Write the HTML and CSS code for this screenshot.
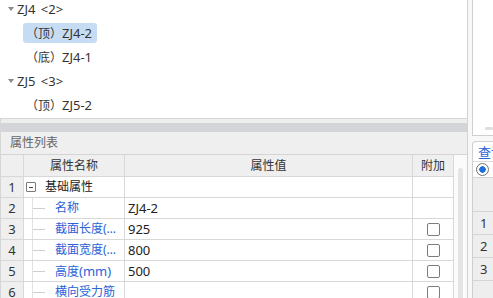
FILE: index.html
```html
<!DOCTYPE html>
<html>
<head>
<meta charset="utf-8">
<link rel="stylesheet" href="styles.css">
</head>
<body>
<div class="app">
  <div class="left">
    <div class="tree-panel">
      <div class="tree">
        <div class="node parent"><span class="caret"></span><span class="lat">ZJ4 &lt;2&gt;</span></div>
        <div class="node child"><span class="item selected">（顶）<span class="lat">ZJ4-2</span></span></div>
        <div class="node child"><span class="item">（底）<span class="lat">ZJ4-1</span></span></div>
        <div class="node parent"><span class="caret"></span><span class="lat">ZJ5 &lt;3&gt;</span></div>
        <div class="node child"><span class="item">（顶）<span class="lat">ZJ5-2</span></span></div>
      </div>
    </div>
    <div class="bottom">
      <div class="spacer"></div>
      <div class="band"></div>
      <div class="prop-title">属性列表</div>
      <div class="prop-body">
        <div class="grid">
          <div class="cell hd"></div>
          <div class="cell hd">属性名称</div>
          <div class="cell hd">属性值</div>
          <div class="cell hd">附加</div>

          <div class="cell rn lat">1</div>
          <div class="cell name"><span class="toggle"></span><span class="group">基础属性</span></div>
          <div class="cell val"></div>
          <div class="cell chk"></div>

          <div class="cell rn lat">2</div>
          <div class="cell name"><span class="guide"></span><span class="label">名称</span></div>
          <div class="cell val lat">ZJ4-2</div>
          <div class="cell chk"></div>

          <div class="cell rn lat">3</div>
          <div class="cell name"><span class="guide"></span><span class="label">截面长度(mm)</span></div>
          <div class="cell val lat">925</div>
          <div class="cell chk"><span class="box"></span></div>

          <div class="cell rn lat">4</div>
          <div class="cell name"><span class="guide"></span><span class="label">截面宽度(mm)</span></div>
          <div class="cell val lat">800</div>
          <div class="cell chk"><span class="box"></span></div>

          <div class="cell rn lat">5</div>
          <div class="cell name"><span class="guide"></span><span class="label">高度<span class="lat">(mm)</span></span></div>
          <div class="cell val lat">500</div>
          <div class="cell chk"><span class="box"></span></div>

          <div class="cell rn lat">6</div>
          <div class="cell name"><span class="guide"></span><span class="label">横向受力筋</span></div>
          <div class="cell val"></div>
          <div class="cell chk"><span class="box"></span></div>
        </div>
        <div class="vscroll"><div class="thumb"></div></div>
      </div>
    </div>
  </div>
  <div class="right">
    <div class="rt-top"><div class="hthumb"></div></div>
    <div class="rt-tab">查询</div>
    <div class="rt-radio"><span class="radio"></span></div>
    <div class="rt-head"></div>
    <div class="rt-row lat">1</div>
    <div class="rt-row lat">2</div>
    <div class="rt-row lat">3</div>
    <div class="rt-rest"></div>
  </div>
</div>
</body>
</html>
```

FILE: styles.css
```css
* { box-sizing: border-box; }
html, body {
  margin: 0;
  padding: 0;
  width: 493px;
  height: 298px;
  overflow: hidden;
  background: #f7f7f7;
  font-family: "Noto Sans", "Noto Sans CJK SC", sans-serif;
  font-size: 12px;
  color: #333;
}
.lat { font-size: 13px; }

.app {
  display: flex;
  width: 493px;
  height: 298px;
  overflow: hidden;
}

.left {
  width: 468px;
  flex: none;
  display: flex;
  flex-direction: column;
  border-right: 1px solid #d2d2d2;
}

.tree-panel {
  height: 119px;
  flex: none;
  background: #fff;
  border-bottom: 1px solid #d6d6d6;
  overflow: hidden;
}
.tree {
  margin-top: -3px;
  display: flex;
  flex-direction: column;
}
.node {
  height: 24px;
  display: flex;
  align-items: center;
  white-space: nowrap;
}
.parent { padding-left: 8px; }
.caret {
  width: 0;
  height: 0;
  border-left: 3px solid transparent;
  border-right: 3px solid transparent;
  border-top: 4px solid #8a8a8a;
  margin-right: 3px;
}
.parent .lat { word-spacing: 2px; }
.child { padding-left: 23px; }
.item {
  height: 20px;
  line-height: 20px;
  padding: 0 5px 0 3px;
  border-radius: 3px;
  display: inline-block;
}
.item.selected { background: #c6dcf3; }

.bottom {
  flex: 1;
  display: flex;
  flex-direction: column;
  border-left: 1px solid #d6d6d6;
  min-height: 0;
  overflow: hidden;
}
.spacer { height: 4px; background: #eeeeee; flex: none; }
.band { height: 9px; background: #d3d5d9; flex: none; }
.prop-title {
  height: 23px;
  flex: none;
  background: #efefef;
  border-bottom: 1px solid #d4d4d4;
  padding-left: 9px;
  line-height: 22px;
  color: #666;
}
.prop-body {
  flex: 1;
  display: flex;
  min-height: 0;
  overflow: hidden;
}
.grid {
  width: 453px;
  flex: none;
  display: grid;
  grid-template-columns: 23px 101px 288px 41px;
  grid-auto-rows: 21px;
  grid-template-rows: 22px;
  background: #fff;
  align-content: start;
}
.cell {
  border-right: 1px solid #d8d8d8;
  border-bottom: 1px solid #d8d8d8;
  line-height: 20px;
  white-space: nowrap;
  overflow: hidden;
}
.hd {
  background: #efefef;
  text-align: center;
  line-height: 21px;
  color: #333;
}
.rn {
  background: #efefef;
  text-align: center;
  color: #333;
}
.name {
  display: flex;
  align-items: center;
  padding-right: 3px;
}
.toggle {
  width: 10px;
  height: 10px;
  flex: none;
  margin-left: 2px;
  border: 1px solid #7a7a7a;
  border-radius: 1px;
  background: linear-gradient(#444, #444) no-repeat center / 4px 1px, #fff;
}
.group { margin-left: 9px; color: #222; }
.guide {
  width: 13px;
  flex: none;
  align-self: stretch;
  margin-left: 8px;
  margin-right: 10px;
  border-left: 1px solid #e2e2e2;
  background: linear-gradient(#cfcfcf, #cfcfcf) no-repeat 0 50% / 100% 1px;
}
.label {
  color: #2b62d8;
  overflow: hidden;
  text-overflow: ellipsis;
  min-width: 0;
}
.val { padding-left: 3px; color: #222; }
.chk {
  display: flex;
  justify-content: center;
  align-items: center;
}
.box {
  width: 13px;
  height: 13px;
  border: 1px solid #7c7c7c;
  border-radius: 2px;
  background: #fff;
}
.vscroll {
  flex: 1;
  background: #fbfbfb;
  padding: 13px 0 0 4px;
}
.thumb {
  width: 5px;
  height: 200px;
  border-radius: 3px;
  background: #e4e4e4;
}

.right {
  flex: 1;
  display: flex;
  flex-direction: column;
  padding-left: 4px;
  background: #f8f8f8;
  overflow: hidden;
}
.rt-top {
  height: 136px;
  flex: none;
  background: #fff;
  border-left: 1px solid #cfcfcf;
  border-bottom: 1px solid #cfcfcf;
  padding: 127px 0 0 12px;
}
.hthumb {
  height: 3px;
  border-radius: 2px;
  background: #dedede;
}
.rt-tab {
  margin-top: 5px;
  height: 21px;
  flex: none;
  background: #fff;
  border-left: 1px solid #cfcfcf;
  border-top: 1px solid #cfcfcf;
  border-top-left-radius: 4px;
  border-bottom: 1px solid #dcdcdc;
  color: #2b62d8;
  font-size: 13px;
  line-height: 20px;
  padding-left: 5px;
  white-space: nowrap;
  overflow: hidden;
}
.rt-radio {
  height: 16px;
  flex: none;
  background: #fff;
  border-left: 1px solid #cfcfcf;
  border-bottom: 1px solid #d6d6d6;
  padding-left: 3px;
  display: flex;
  align-items: center;
}
.radio {
  width: 13px;
  height: 13px;
  border-radius: 50%;
  border: 1px solid #707070;
  background: radial-gradient(circle, #1f6fe0 0 3px, #fff 3.5px);
}
.rt-head {
  height: 34px;
  flex: none;
  background: #eeeeee;
  border-left: 1px solid #cfcfcf;
  border-bottom: 1px solid #d4d4d4;
}
.rt-row {
  height: 23px;
  flex: none;
  background: #eeeeee;
  border-left: 1px solid #cfcfcf;
  border-bottom: 1px solid #d4d4d4;
  line-height: 22px;
  padding-left: 7px;
  color: #333;
}
.rt-rest {
  flex: 1;
  background: #eeeeee;
  border-left: 1px solid #cfcfcf;
}
```
